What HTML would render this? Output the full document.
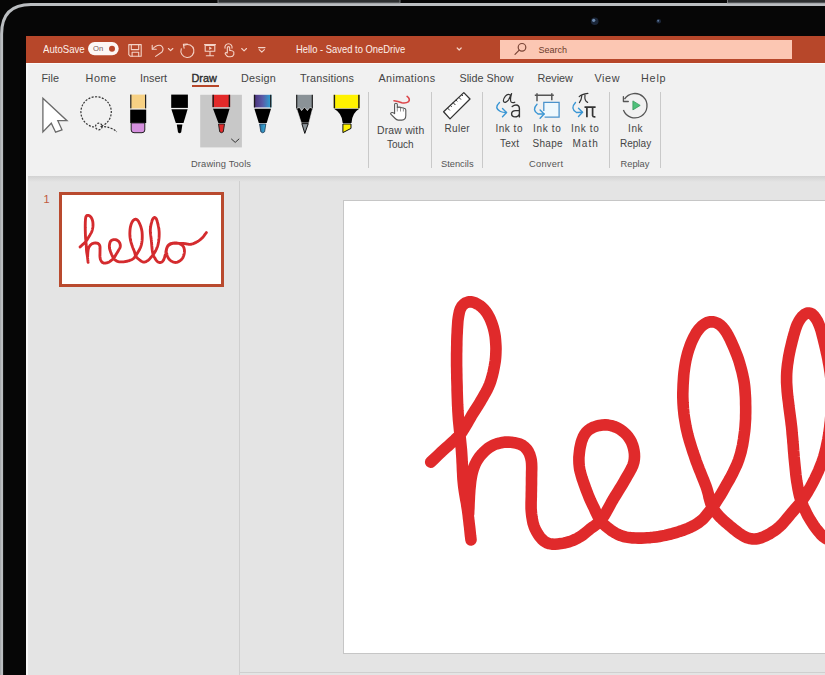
<!DOCTYPE html>
<html><head><meta charset="utf-8">
<style>
*{margin:0;padding:0;box-sizing:border-box}
html,body{width:825px;height:675px;overflow:hidden;background:#060606;font-family:"Liberation Sans",sans-serif}
.a{position:absolute}
.t{position:absolute;white-space:nowrap;line-height:1}
#screen{left:26px;top:36px;width:799px;height:639px;background:#e4e4e4}
#title{left:26px;top:36px;width:799px;height:27px;background:#b7472a}
#ribbon{left:26px;top:63px;width:799px;height:113px;background:#f1f1f1;border-top:1.5px solid #fbfbfb}
#shadow{left:26px;top:176px;width:799px;height:6px;background:linear-gradient(#d2d2d2,#e4e4e4)}
#search{left:500px;top:40px;width:292px;height:19px;background:#fcc7b3}
.tab{color:#454545;font-size:10.8px}
.lbl{color:#454545;font-size:10px}
.grp{color:#555;font-size:9.3px}
.sep{position:absolute;width:1px;background:#c9c9c9;top:92px;height:76px}
</style></head><body>
<svg class="a" style="left:0;top:0" width="825" height="675" viewBox="0 0 825 675">
  <path d="M1.6,675 V34 Q1.6,4.6 31,4.6 H825" fill="none" stroke="#babdc0" stroke-width="3"/>
  <rect x="218" y="-2" width="182" height="5" fill="#2e3031" stroke="#8a8d90" stroke-width="0.8"/>
  <rect x="727.5" y="-2" width="120" height="5" fill="#2e3031" stroke="#8a8d90" stroke-width="0.8"/>
  <circle cx="594.7" cy="21.3" r="3.8" fill="#1b2638"/>
  <circle cx="593.7" cy="20.3" r="1.6" fill="#6d8bb0"/>
  <circle cx="658.7" cy="21.3" r="2.3" fill="#1b2638"/>
  <circle cx="658.2" cy="20.8" r="1" fill="#5a7498"/>
</svg>
<div id="screen" class="a"></div>
<div id="title" class="a"></div>
<div id="search" class="a"></div>
<div id="ribbon" class="a"></div>
<div id="shadow" class="a"></div>
<div class="a" style="left:26px;top:64px;width:2px;height:611px;background:#f7f7f7"></div>
<!-- separators -->
<div class="sep" style="left:368px"></div>
<div class="sep" style="left:431px"></div>
<div class="sep" style="left:482px"></div>
<div class="sep" style="left:609px"></div>
<div class="sep" style="left:660px"></div>
<!-- pane separator & slide -->
<div class="a" style="left:239px;top:181px;width:1px;height:494px;background:#cfcfcf"></div>
<div class="a" style="left:240px;top:671.5px;width:585px;height:1px;background:#cfcfcf"></div>
<div class="a" style="left:59px;top:192px;width:165px;height:95px;border:3px solid #b94a2e;background:#fff"></div>
<div class="a" style="left:343px;top:200px;width:500px;height:454px;border:1px solid #c6c6c6;background:#fff"></div>

<svg class="a" style="left:0;top:0" width="825" height="675" viewBox="0 0 825 675">
  <!-- title bar icons -->
  <rect x="88" y="42.1" width="30.7" height="13.1" rx="6.55" fill="#fdf7f5"/>
  <circle cx="112" cy="48.8" r="3" fill="#b9472b"/>
  <g fill="none" stroke="#f4d3c7" stroke-width="1.1" stroke-linecap="round" stroke-linejoin="round">
    <path d="M128.8,44.6 H141.2 V56.3 H130.4 L128.8,54.7 Z"/>
    <path d="M131.3,44.6 V49.6 H138.7 V44.6"/>
    <path d="M132.1,56.3 V52.2 H138.7 V56.3"/>
    <path d="M152.2,45.2 V49.3 H156.3"/>
    <path d="M152.5,49 Q157,44 161,45.6 Q164.5,48 162,52 L155.6,56.4"/>
    <path d="M168.4,48.5 L170.6,50.7 L172.8,48.5"/>
    <path d="M184.4,45.2 A6.5,6.5 0 1 1 181.3,48.7"/>
    <path d="M183.4,44.3 L187.4,44.1 M183.4,44.3 L184.1,48.1"/>
    <path d="M204.5,44.6 H215.5 M205.2,44.6 V51.2 H214.8 V44.6 M210,51.2 V55.6 M206.3,55.8 H213.6"/>
    <path d="M225,48.2 A3.6,3.6 0 1 1 232,48.2"/>
    <path d="M227.3,53 V47.8 Q227.3,46.6 228.5,46.6 Q229.7,46.6 229.7,47.8 V50.5 Q232.5,50.2 233.8,52 V54.5 Q233,56.7 230.5,56.7 H228.5 Q226.8,56.7 225.4,54.3 Q224.6,53 226.2,52.6 L227.3,53"/>
    <path d="M241.7,48.5 L244.1,50.8 L246.5,48.5"/>
    <path d="M258.5,47.6 H265 M259.2,49.6 L261.8,52.2 L264.4,49.6"/>
  </g>
  <path d="M209.2,46.6 V50 L212,48.3 Z" fill="#f4d3c7"/>
  <rect x="205.2" y="44.6" width="9.6" height="1.4" fill="#f4d3c7"/>
  <!-- search icon -->
  <g fill="none" stroke="#7a4536" stroke-width="1.2" stroke-linecap="round">
    <circle cx="522" cy="47.3" r="3.8"/>
    <path d="M519.2,50.1 L515,54.3"/>
  </g>
  <path d="M457.2,48 L459.2,50 L461.2,48" fill="none" stroke="#f4d3c7" stroke-width="1.2" stroke-linecap="round" stroke-linejoin="round"/>
  <!-- cursor -->
  <path d="M42.9,98.2 L67,120.7 L57.8,120.7 L62,129.8 L55.6,132.2 L51.3,123.2 L42.9,132 Z" fill="#fff" stroke="#6a6a6a" stroke-width="1.3" stroke-linejoin="miter"/>
  <!-- lasso -->
  <g fill="none" stroke="#333" stroke-width="1.2" stroke-dasharray="2 1.4">
    <path d="M94,127 A15.2,15.2 0 1 1 100.5,126.5"/>
    <circle cx="98.8" cy="126.5" r="3.3"/>
    <path d="M100.5,126.5 Q111,126.5 116.8,131.8"/>
  </g>
  <!-- eraser -->
  <rect x="130.6" y="94.6" width="15.2" height="13.8" fill="#f7d184"/>
  <rect x="130.2" y="94.6" width="1.2" height="13.8" fill="#222"/>
  <rect x="145" y="94.6" width="1.2" height="13.8" fill="#222"/>
  <rect x="130.2" y="109.6" width="16" height="13.4" fill="#000"/>
  <path d="M131.2,122.9 H144.8 V130 Q144.8,132.7 142,132.7 H134 Q131.2,132.7 131.2,130 Z" fill="#d590de" stroke="#222" stroke-width="1"/>
  <!-- pen black -->
  <rect x="171.2" y="94.6" width="16.7" height="13.3" fill="#000"/>
  <path d="M171.4,109.3 H187.6 L183.5,122.9 H175.8 Z" fill="#000"/>
  <path d="M176.8,124.5 H182.4 L181.2,132.3 Q179.6,134 178,132.3 Z" fill="#000"/>
  <!-- selected pen bg -->
  <rect x="200.2" y="94.8" width="41.7" height="52.6" fill="#c8c8c8"/>
  <rect x="212.5" y="94.8" width="17.6" height="12.3" fill="#e32a2a"/>
  <rect x="212.5" y="94.8" width="1.4" height="12.3" fill="#1a1a1a"/>
  <rect x="228.7" y="94.8" width="1.4" height="12.3" fill="#1a1a1a"/>
  <path d="M213,108.7 H229.6 L225.2,122.9 H218.4 Z" fill="#000"/>
  <path d="M218.5,124 H224.5 L223.3,131.8 Q221.5,133.6 219.7,131.8 Z" fill="#e02a2a" stroke="#1a1a1a" stroke-width="0.9"/>
  <path d="M231.2,138.8 L235.2,142.4 L239.2,138.8" fill="none" stroke="#333" stroke-width="1"/>
  <!-- galaxy pen -->
  <defs><linearGradient id="gal" x1="0" y1="0" x2="1" y2="0"><stop offset="0" stop-color="#4b2f7a"/><stop offset="0.5" stop-color="#5a5ca8"/><stop offset="1" stop-color="#27a9d6"/></linearGradient>
  <linearGradient id="tipb" x1="0" y1="0" x2="1" y2="0"><stop offset="0" stop-color="#2a6fa0"/><stop offset="1" stop-color="#3bb3e0"/></linearGradient></defs>
  <rect x="253.9" y="94.8" width="17.5" height="12.6" fill="url(#gal)"/>
  <rect x="253.9" y="94.8" width="1.3" height="12.6" fill="#1a1a1a"/>
  <rect x="270.1" y="94.8" width="1.3" height="12.6" fill="#1a1a1a"/>
  <path d="M254.4,108.8 H271 L266.7,122.9 H258.8 Z" fill="#000"/>
  <path d="M259.6,124 H265.8 L264.6,131.8 Q262.7,133.8 260.8,131.8 Z" fill="url(#tipb)" stroke="#1a3550" stroke-width="0.8"/>
  <!-- pencil -->
  <rect x="296.1" y="94.8" width="16.8" height="15" fill="#8a9297"/>
  <rect x="296.1" y="94.8" width="1.2" height="14" fill="#222"/>
  <rect x="311.7" y="94.8" width="1.2" height="14" fill="#222"/>
  <path d="M296.6,108.5 L299.4,107.4 L301.6,110.6 L304.5,107.2 L307.4,110.6 L309.9,107.4 L312.6,108.5 L308.9,122.9 H301.3 Z" fill="#000" stroke="#eee" stroke-width="0.6"/>
  <path d="M301.8,123.6 H308.3 L304.8,133.4 Z" fill="#8a9297" stroke="#000" stroke-width="0.9" stroke-linejoin="round"/>
  <!-- highlighter -->
  <rect x="333.7" y="94.8" width="25.9" height="13.4" fill="#fff200"/>
  <rect x="333.7" y="94.8" width="1.4" height="13.4" fill="#1a1a1a"/>
  <rect x="358.2" y="94.8" width="1.4" height="13.4" fill="#1a1a1a"/>
  <path d="M334,108.8 H359.3 Q352,113 351.5,122.9 H342.7 Q342,113 334,108.8 Z" fill="#000"/>
  <path d="M342.9,124 H351 V128.4 L342.9,132.6 Z" fill="#fff200" stroke="#111" stroke-width="1"/>
  <!-- draw with touch -->
  <path d="M394,100.7 Q398,101 401.8,102.7 Q406,103.5 408.6,101.6 Q410.6,99 407.1,96.4" fill="none" stroke="#dc4448" stroke-width="1.6" stroke-linecap="round"/>
  <path d="M394.6,112.6 V104.6 Q394.6,103.2 396,103.2 Q397.3,103.2 397.3,104.6 V107.4 Q399.6,106.8 401.6,107.7 Q403.6,107.6 404.4,108.5 Q405.8,108.6 405.8,110 V115.5 Q405.8,120 401.8,120.1 H398.2 Q396.6,120 395.2,118.5 L390.8,114.2 Q390.3,113.2 391.3,112.7 Q392.6,112.2 394.6,113.6 Z" fill="#fff" stroke="#555" stroke-width="1.1" stroke-linejoin="round"/>
  <path d="M397.3,107.4 V111.5 M400.5,107.6 V111.5 M403.4,108.2 V111.5" fill="none" stroke="#777" stroke-width="0.8"/>
  <!-- ruler -->
  <path d="M443.6,111.8 L463.8,92.6 L470,99 L450,118.9 Z" fill="#fff" stroke="#333" stroke-width="1.3" stroke-linejoin="round"/>
  <g stroke="#333" stroke-width="1">
    <path d="M447.5,108 L449.8,110.4 M450.3,105.3 L451.7,106.8 M453.1,102.6 L455.4,105 M455.9,99.9 L457.3,101.4 M458.7,97.2 L461,99.6 M461.5,94.5 L462.9,96"/>
  </g>
  <!-- ink to text -->
  <path d="M499.5,102.4 Q493.5,107.95 500.5,111.5 Q502.5,112.5 506.5,112.5" fill="none" stroke="#3a96d4" stroke-width="1.4" stroke-linecap="round"/>
  <path d="M502.5,108.5 L506.5,112.5 L502.5,116.8" fill="none" stroke="#3a96d4" stroke-width="1.4" stroke-linecap="round" stroke-linejoin="round"/>
  <path d="M510.8,95.8 Q508.5,92.6 505.4,96.2 Q502.6,99.8 503.7,101.8 Q505.6,103.4 508.6,99.8 L511.6,93.6 Q509.8,99.6 511,101.8 Q512.6,103.4 514.8,102.2" fill="none" stroke="#333" stroke-width="1.2" stroke-linecap="round" stroke-linejoin="round"/>
  <path d="M512.2,106.6 Q514,105 516,105 Q519.4,105 519.4,108.8 V116.9 M519.4,110.6 H515.6 Q511.6,110.6 511.6,113.8 Q511.6,116.9 515,116.9 Q518.2,116.9 519.4,114.2" fill="none" stroke="#333" stroke-width="1.4" stroke-linecap="round" stroke-linejoin="round"/>
  <!-- ink to shape -->
  <path d="M534.8,95.3 H553.8 M537,93.3 V101.3 M551.8,93.3 V100.2" fill="none" stroke="#555" stroke-width="1.5"/>
  <path d="M543.8,111 V102.4 H559.1 V117.2 H544.6" fill="#eef8fd" stroke="#4a93cc" stroke-width="1.3"/>
  <path d="M537,104.3 Q531.5,110.15 538,114 Q540,114 544.1,114" fill="none" stroke="#3a96d4" stroke-width="1.4" stroke-linecap="round"/>
  <path d="M540.1,110 L544.1,114 L540.1,118.3" fill="none" stroke="#3a96d4" stroke-width="1.4" stroke-linecap="round" stroke-linejoin="round"/>
  <!-- ink to math -->
  <path d="M575.5,102.4 Q569.8,108.45 576.5,112.5 Q578.5,112.3 582.5,112.3" fill="none" stroke="#3a96d4" stroke-width="1.4" stroke-linecap="round"/>
  <path d="M578.5,108.3 L582.5,112.3 L578.5,116.6" fill="none" stroke="#3a96d4" stroke-width="1.4" stroke-linecap="round" stroke-linejoin="round"/>
  <path d="M579.2,96.6 Q581.5,94.2 587.9,93.4 M581.8,95.8 Q581.5,100 579.4,102.6 M585,95.2 Q584.2,100.8 587.6,102.4" fill="none" stroke="#333" stroke-width="1.2" stroke-linecap="round"/>
  <path d="M584.5,107.2 H595.6 M586.9,107.2 V117.2 M592.6,107.2 V115.6 Q592.8,117 595.4,116.8" fill="none" stroke="#333" stroke-width="1.7"/>
  <!-- ink replay -->
  <path d="M624.5,99.2 A12.2,12.2 0 1 1 623.4,110" fill="none" stroke="#555" stroke-width="1.3"/>
  <path d="M623.4,96.6 V101.5 H628.3" fill="none" stroke="#555" stroke-width="1.3" stroke-linecap="round" stroke-linejoin="round"/>
  <path d="M632.9,100.9 L640.2,105.4 L632.9,109.9 Z" fill="#4ec07a" stroke="#3a9b5e" stroke-width="0.8" stroke-linejoin="round"/>
  <!-- hello big -->
  <g fill="none" stroke="#e02a2b" stroke-width="11.6" stroke-linecap="round" stroke-linejoin="round">
    <path d="M430.7,462.1 433.1,459.9 435.1,458.0 437.3,455.9 439.4,453.9 441.6,451.8 443.8,449.8 446.0,447.8 448.3,445.8 450.5,443.8 452.7,441.8 455.0,439.7 457.1,437.6 459.2,435.5 461.1,433.2 462.8,430.7 464.4,428.2 465.9,425.6 467.4,423.0 468.9,420.4 470.4,417.8 471.9,415.2 473.5,412.7 475.1,410.1 476.7,407.6 478.3,405.1 479.9,402.5 481.4,399.9 482.9,397.3 484.4,394.7 485.9,392.1 487.3,389.5 488.5,386.8 489.7,384.0 490.7,381.2 491.6,378.3 492.4,375.4 493.1,372.5 493.7,369.6 494.3,366.6 494.8,363.7 495.3,360.7 495.6,357.7 495.8,354.7 495.9,351.7 496.0,348.7 495.9,345.7 495.7,342.7 495.5,339.8 495.2,336.8 494.7,333.8 494.1,330.9 493.4,328.0 492.5,325.1 491.5,322.3 490.4,319.5 489.1,316.8 487.6,314.2 486.0,311.7 484.1,309.4 482.0,307.3 479.6,305.4 477.1,303.9 474.4,302.6 471.6,301.9 468.7,301.9 466.0,302.7 463.6,304.3 461.7,306.4 460.3,309.0 459.4,311.8 458.8,314.8 458.3,317.7 457.9,320.7 457.7,323.7 457.5,326.7 457.3,329.7 457.2,332.7 457.0,335.7 456.9,338.7 456.8,341.7 456.8,344.7 456.7,347.7 456.7,350.7 456.6,353.7 456.6,356.7 456.6,359.7 456.6,362.7 456.6,365.7 456.7,368.7 456.7,371.7 456.8,374.7 456.8,377.7 456.9,380.7 457.0,383.7 457.1,386.7 457.1,389.7 457.2,392.7 457.3,395.7 457.4,398.6 457.5,401.6 457.6,404.6 457.8,407.6 457.9,410.6 458.1,413.6 458.3,416.6 458.5,419.6 458.8,422.6 459.1,425.6 459.4,428.6 459.7,431.6 459.9,434.5 460.2,437.5 460.5,440.5 460.8,443.5 461.1,446.5 461.4,449.5 461.6,452.5 461.8,455.5 462.0,458.5 462.1,461.5 462.3,464.5 462.4,467.5 462.5,470.4 462.7,473.4 462.8,476.4 463.0,479.4 463.3,482.4 463.6,485.4 464.0,488.4 464.4,491.3 464.9,494.3 465.4,497.3 465.9,500.2 466.5,503.2 466.9,506.1 467.4,509.1 467.8,512.1 468.2,515.0 468.5,518.0 468.9,521.0 469.2,524.0 469.6,527.0 469.9,529.9 470.2,532.9 470.5,535.8 470.8,538.1 471.0,539.9 M468.6,514.0 468.7,510.8 468.9,508.0 469.0,505.0 469.1,502.0 469.3,499.0 469.4,496.0 469.6,493.0 469.8,490.0 470.1,487.0 470.4,484.1 470.7,481.1 471.2,478.1 471.7,475.2 472.4,472.2 473.2,469.4 474.2,466.5 475.3,463.8 476.7,461.1 478.3,458.6 480.0,456.2 482.0,453.9 484.1,451.7 486.3,449.7 488.6,447.9 491.1,446.3 493.8,444.9 496.6,443.9 499.5,443.1 502.4,442.5 505.4,442.1 508.4,442.1 511.3,442.3 514.3,442.7 517.2,443.4 520.1,444.2 522.7,445.5 525.0,447.3 527.0,449.5 528.6,452.0 529.8,454.7 530.7,457.6 531.3,460.5 531.6,463.5 531.7,466.5 531.7,469.5 531.6,472.5 531.6,475.5 531.5,478.5 531.5,481.5 531.5,484.5 531.4,487.5 531.4,490.5 531.3,493.5 531.3,496.5 531.2,499.5 531.1,502.5 531.1,505.5 531.1,508.5 531.3,511.4 531.6,514.4 532.0,517.4 532.5,520.4 533.1,523.3 534.0,526.1 535.1,528.9 536.5,531.6 538.0,534.2 539.7,536.6 541.6,538.9 543.8,540.9 546.2,542.5 549.0,543.6 551.9,544.1 554.8,544.2 557.8,543.9 560.8,543.6 563.8,543.1 566.7,542.4 569.6,541.6 572.4,540.6 575.2,539.4 577.8,538.1 580.4,536.6 582.8,534.9 585.2,533.0 587.5,531.1 589.8,529.2 592.2,527.4 594.7,525.7 597.1,523.9 599.3,521.9 601.3,519.6 603.0,517.2 604.7,514.7 606.2,512.1 607.6,509.5 609.0,506.9 610.5,504.2 611.9,501.6 613.4,499.0 615.0,496.4 616.6,493.9 618.2,491.3 619.7,488.8 621.3,486.2 622.8,483.7 624.3,481.1 625.8,478.5 627.3,475.9 628.8,473.3 630.3,470.7 631.7,468.0 632.9,465.3 633.8,462.4 634.3,459.5 634.5,456.5 634.4,453.5 634.0,450.6 633.4,447.7 632.5,444.8 631.4,442.0 630.0,439.4 628.3,436.9 626.4,434.6 624.3,432.6 622.0,430.7 619.5,429.0 616.9,427.6 614.1,426.5 611.2,425.6 608.3,425.1 605.3,424.8 602.4,425.0 599.4,425.4 596.5,426.1 593.7,427.1 591.0,428.4 588.6,430.0 586.4,432.0 584.6,434.4 583.2,437.0 582.1,439.8 581.2,442.6 580.5,445.6 579.9,448.5 579.5,451.5 579.2,454.4 578.9,457.4 578.9,460.4 579.0,463.4 579.3,466.4 579.7,469.4 580.4,472.3 581.2,475.2 582.0,478.0 583.0,480.9 584.0,483.7 585.0,486.5 586.0,489.4 587.1,492.2 588.2,495.0 589.3,497.7 590.5,500.5 591.8,503.2 593.1,505.9 594.4,508.6 595.6,511.3 596.9,514.1 598.2,516.8 599.6,519.4 601.3,521.8 603.4,524.0 605.6,526.0 607.9,527.9 610.3,529.7 612.7,531.4 615.3,533.0 617.9,534.4 620.7,535.6 623.5,536.5 626.4,537.1 629.4,537.6 632.4,537.9 635.4,538.0 638.4,538.1 641.3,538.1 644.3,538.0 647.3,537.8 650.3,537.6 653.3,537.3 656.3,536.9 659.3,536.5 662.2,535.9 665.2,535.4 668.1,534.7 671.0,534.0 673.9,533.2 676.8,532.4 679.6,531.4 682.5,530.5 685.3,529.4 688.1,528.3 690.8,527.1 693.5,525.8 696.1,524.3 698.6,522.6 700.9,520.8 703.2,518.8 705.2,516.6 707.1,514.3 709.0,512.0 710.8,509.6 712.6,507.2 714.3,504.7 716.0,502.2 717.6,499.7 719.2,497.2 720.8,494.6 722.3,492.0 723.8,489.4 725.2,486.8 726.7,484.2 728.2,481.6 729.7,479.0 731.1,476.3 732.5,473.7 733.8,471.0 735.1,468.3 736.4,465.6 737.5,462.8 738.6,460.0 739.5,457.1 740.4,454.3 741.2,451.4 741.8,448.5 742.5,445.5 743.0,442.6 743.5,439.6 743.9,436.6 744.3,433.7 744.7,430.7 745.0,427.7 745.2,424.7 745.4,421.7 745.6,418.7 745.6,415.7 745.7,412.7 745.7,409.7 745.7,406.7 745.6,403.7 745.6,400.7 745.5,397.7 745.3,394.7 745.1,391.7 744.9,388.8 744.6,385.8 744.2,382.8 743.7,379.8 743.1,376.9 742.5,374.0 741.8,371.0 741.0,368.1 740.2,365.2 739.4,362.4 738.5,359.5 737.5,356.7 736.4,353.9 735.3,351.1 734.2,348.3 733.0,345.6 731.7,342.8 730.5,340.1 729.2,337.4 727.8,334.8 726.3,332.2 724.6,329.7 722.7,327.4 720.6,325.3 718.1,323.6 715.5,322.4 712.6,321.8 709.8,321.9 707.0,322.7 704.4,324.1 702.0,325.9 699.9,328.0 698.0,330.3 696.3,332.7 694.8,335.3 693.4,338.0 692.1,340.7 690.9,343.5 689.9,346.3 688.9,349.1 688.0,351.9 687.2,354.8 686.5,357.7 685.8,360.7 685.3,363.6 684.8,366.6 684.4,369.6 684.0,372.5 683.7,375.5 683.5,378.5 683.3,381.5 683.1,384.5 683.0,387.5 682.9,390.5 682.8,393.5 682.8,396.5 682.9,399.5 683.0,402.5 683.2,405.5 683.4,408.5 683.7,411.5 684.0,414.4 684.4,417.4 684.9,420.4 685.4,423.3 685.9,426.3 686.5,429.2 687.2,432.1 687.9,435.1 688.7,438.0 689.5,440.8 690.4,443.7 691.3,446.6 692.2,449.4 693.1,452.3 694.1,455.1 695.1,458.0 696.0,460.8 697.1,463.6 698.1,466.4 699.2,469.2 700.4,472.0 701.5,474.8 702.6,477.6 703.7,480.3 704.8,483.1 705.9,485.9 706.9,488.8 707.7,491.6 708.5,494.5 709.1,497.5 709.9,500.4 710.7,503.2 711.9,506.0 713.3,508.6 714.9,511.1 716.8,513.5 718.7,515.7 720.8,517.9 723.0,520.0 725.2,522.0 727.5,523.9 729.8,525.9 732.1,527.8 734.4,529.7 736.8,531.5 739.2,533.3 741.7,534.9 744.3,536.4 747.0,537.7 749.8,538.6 752.7,539.0 755.7,539.0 758.6,538.5 761.5,537.6 764.2,536.5 766.9,535.2 769.6,533.8 772.1,532.2 774.6,530.6 777.0,528.8 779.3,526.9 781.5,524.8 783.5,522.6 785.5,520.3 787.4,518.0 789.3,515.7 791.2,513.4 793.2,511.1 795.1,508.9 797.1,506.6 799.1,504.3 800.9,502.0 802.7,499.5 804.4,497.0 806.0,494.5 807.6,492.0 809.1,489.4 810.6,486.8 812.0,484.2 813.4,481.5 814.8,478.8 816.1,476.1 817.3,473.4 818.6,470.7 819.7,467.9 820.8,465.1 821.9,462.3 822.9,459.5 823.8,456.6 824.6,453.7 825.4,450.8 826.1,447.9 826.7,445.0 827.3,442.1 827.9,439.1 828.4,436.2 828.9,433.2 829.3,430.2 829.7,427.3 830.0,424.3 830.4,421.3 830.6,418.3 830.9,415.3 831.1,412.3 831.3,409.3 831.4,406.3 831.5,403.3 831.6,400.3 831.6,397.3 831.6,394.3 831.6,391.3 831.5,388.3 831.3,385.3 831.2,382.3 830.9,379.4 830.6,376.4 830.3,373.4 829.8,370.4 829.4,367.5 828.9,364.5 828.3,361.6 827.8,358.6 827.2,355.7 826.5,352.7 825.9,349.8 825.2,346.9 824.5,344.0 823.8,341.1 823.1,338.1 822.3,335.2 821.6,332.3 820.8,329.5 819.8,326.6 818.7,323.8 817.5,321.1 815.9,318.5 814.2,316.2 812.1,314.1 809.7,313.0 807.1,313.1 804.6,314.4 802.4,316.3 800.5,318.6 798.9,321.1 797.5,323.8 796.4,326.5 795.4,329.4 794.6,332.2 793.7,335.1 793.0,338.0 792.2,340.9 791.5,343.8 790.8,346.8 790.1,349.7 789.5,352.6 788.9,355.6 788.4,358.5 788.0,361.5 787.5,364.5 787.2,367.4 786.9,370.4 786.7,373.4 786.6,376.4 786.6,379.4 786.6,382.4 786.8,385.4 787.0,388.4 787.2,391.4 787.5,394.4 787.8,397.4 788.2,400.3 788.6,403.3 788.9,406.3 789.3,409.3 789.7,412.2 790.1,415.2 790.5,418.2 790.9,421.2 791.2,424.1 791.6,427.1 791.9,430.1 792.1,433.1 792.4,436.1 792.7,439.1 792.9,442.1 793.2,445.0 793.4,448.0 793.6,451.0 793.9,454.0 794.1,457.0 794.4,460.0 794.7,463.0 795.0,466.0 795.3,469.0 795.6,471.9 795.9,474.9 796.3,477.9 796.7,480.9 797.2,483.8 797.7,486.8 798.2,489.7 798.8,492.7 799.5,495.6 800.3,498.5 801.3,501.3 802.4,504.1 803.5,506.9 804.8,509.6 806.1,512.3 807.4,515.0 808.9,517.6 810.4,520.2 812.0,522.7 813.6,525.2 815.4,527.7 817.2,530.0 819.1,532.3 821.1,534.6 823.3,536.6 825.7,538.4 828.3,539.8 831.1,540.8 834.0,541.3 836.9,541.3 839.8,540.8 842.6,539.7 845.2,538.3 847.5,536.5 849.6,534.4 851.5,532.0 853.1,529.5 854.5,526.9 855.7,524.1 856.8,521.3 857.8,518.5 858.7,515.7 859.6,512.8 860.5,509.9 861.4,507.1 862.2,504.2 862.9,501.3 863.6,498.4 864.2,495.4 864.7,492.5 865.3,489.5 865.8,486.5 866.3,483.6 866.8,480.6 867.4,477.7 868.0,474.8 868.8,471.9 869.7,469.0 870.7,466.2 871.8,463.4 873.1,460.7 874.5,458.0 876.1,455.6 878.0,453.3 880.1,451.2 882.5,449.3 885.0,447.8 887.7,446.4 890.5,445.4 893.3,444.5 896.3,443.8 899.2,443.2 902.2,442.8 905.1,442.4 908.1,442.2 911.1,442.0 914.1,442.0 917.1,442.1 920.1,442.2 923.1,442.6 926.0,443.1 928.9,443.8 931.8,444.7 934.6,445.7 937.4,446.8 940.1,448.1 942.7,449.6 945.2,451.2 947.6,453.0 949.8,455.0 951.8,457.2 953.6,459.6 955.1,462.2 956.3,464.9 957.3,467.7 958.2,470.6 958.8,473.5 959.3,476.5 959.6,479.5 959.7,482.5 959.7,485.5 959.5,488.5 959.2,491.4 958.8,494.4 958.2,497.4 957.6,500.3 956.8,503.2 955.9,506.0 954.9,508.9 953.8,511.7 952.6,514.4 951.2,517.0 949.7,519.6 947.9,522.0 946.0,524.3 944.0,526.5 941.8,528.5 939.5,530.5 937.1,532.2 934.6,533.9 932.0,535.4 929.4,536.8 926.6,538.1 923.8,539.2 921.0,540.0 918.0,540.6 915.1,540.9 912.1,540.8 909.1,540.4 906.2,539.7 903.4,538.8 900.6,537.6 897.9,536.3 895.3,534.9 892.8,533.3 890.3,531.6 887.9,529.8 885.7,527.8 883.5,525.7 881.5,523.5 879.7,521.1 878.0,518.6 876.6,516.0 875.2,513.4 874.0,510.6 872.9,507.8 872.0,505.0 871.1,502.1 870.3,499.2 869.6,496.3 869.1,493.4 868.6,490.4 868.3,487.4 868.1,484.4 868.1,481.4 868.3,478.4 868.7,475.5 869.3,472.5 870.1,469.7 871.1,466.8 872.2,464.1 873.6,461.4 875.3,458.9 877.1,456.6 879.2,454.5 881.5,452.6 884.0,450.9 886.5,449.4 889.2,448.1 892.0,446.9 894.8,445.9 897.7,445.1 900.6,444.4 903.6,444.0 906.6,443.8 909.6,443.6 912.6,443.6 915.6,443.6 918.6,443.7 921.6,443.7 924.6,443.8 927.6,443.8 930.6,443.8 933.6,443.8 936.6,443.8 939.6,443.9 942.6,444.0 945.6,444.1 948.5,444.2 951.5,444.4 954.5,444.6 957.5,444.8 960.5,445.1 963.5,445.5 966.4,446.0 969.4,446.6 972.3,447.1 975.3,447.7 978.2,448.2 981.2,448.6 984.2,448.9 987.2,448.9 990.2,448.8 993.1,448.4 996.1,447.8 999.0,447.1 1001.8,446.2 1004.7,445.2 1007.5,444.1 1010.2,443.0 1012.9,441.7 1015.6,440.4 1018.3,439.1 1021.0,437.7 1023.6,436.2 1026.2,434.7 1028.7,433.1 1031.3,431.5 1033.7,429.8 1036.1,428.0 1038.5,426.2 1040.9,424.3 1043.1,422.4 1045.4,420.4 1047.6,418.3 1049.7,416.2 1051.8,414.1 1053.8,411.8 1055.7,409.5 1057.6,407.2 1059.4,404.8 1061.2,402.4 1063.0,400.0 1064.8,397.6 1066.5,395.2 1068.3,392.8 1069.7,391.0 1070.8,389.6"/>
  </g>
  <g fill="none" stroke="#d42b2e" stroke-width="14.5" stroke-linecap="round" stroke-linejoin="round" transform="matrix(0.1972 0 0 0.1972 -4.8 155.8)">
    <path d="M430.7,462.1 433.1,459.9 435.1,458.0 437.3,455.9 439.4,453.9 441.6,451.8 443.8,449.8 446.0,447.8 448.3,445.8 450.5,443.8 452.7,441.8 455.0,439.7 457.1,437.6 459.2,435.5 461.1,433.2 462.8,430.7 464.4,428.2 465.9,425.6 467.4,423.0 468.9,420.4 470.4,417.8 471.9,415.2 473.5,412.7 475.1,410.1 476.7,407.6 478.3,405.1 479.9,402.5 481.4,399.9 482.9,397.3 484.4,394.7 485.9,392.1 487.3,389.5 488.5,386.8 489.7,384.0 490.7,381.2 491.6,378.3 492.4,375.4 493.1,372.5 493.7,369.6 494.3,366.6 494.8,363.7 495.3,360.7 495.6,357.7 495.8,354.7 495.9,351.7 496.0,348.7 495.9,345.7 495.7,342.7 495.5,339.8 495.2,336.8 494.7,333.8 494.1,330.9 493.4,328.0 492.5,325.1 491.5,322.3 490.4,319.5 489.1,316.8 487.6,314.2 486.0,311.7 484.1,309.4 482.0,307.3 479.6,305.4 477.1,303.9 474.4,302.6 471.6,301.9 468.7,301.9 466.0,302.7 463.6,304.3 461.7,306.4 460.3,309.0 459.4,311.8 458.8,314.8 458.3,317.7 457.9,320.7 457.7,323.7 457.5,326.7 457.3,329.7 457.2,332.7 457.0,335.7 456.9,338.7 456.8,341.7 456.8,344.7 456.7,347.7 456.7,350.7 456.6,353.7 456.6,356.7 456.6,359.7 456.6,362.7 456.6,365.7 456.7,368.7 456.7,371.7 456.8,374.7 456.8,377.7 456.9,380.7 457.0,383.7 457.1,386.7 457.1,389.7 457.2,392.7 457.3,395.7 457.4,398.6 457.5,401.6 457.6,404.6 457.8,407.6 457.9,410.6 458.1,413.6 458.3,416.6 458.5,419.6 458.8,422.6 459.1,425.6 459.4,428.6 459.7,431.6 459.9,434.5 460.2,437.5 460.5,440.5 460.8,443.5 461.1,446.5 461.4,449.5 461.6,452.5 461.8,455.5 462.0,458.5 462.1,461.5 462.3,464.5 462.4,467.5 462.5,470.4 462.7,473.4 462.8,476.4 463.0,479.4 463.3,482.4 463.6,485.4 464.0,488.4 464.4,491.3 464.9,494.3 465.4,497.3 465.9,500.2 466.5,503.2 466.9,506.1 467.4,509.1 467.8,512.1 468.2,515.0 468.5,518.0 468.9,521.0 469.2,524.0 469.6,527.0 469.9,529.9 470.2,532.9 470.5,535.8 470.8,538.1 471.0,539.9 M468.6,514.0 468.7,510.8 468.9,508.0 469.0,505.0 469.1,502.0 469.3,499.0 469.4,496.0 469.6,493.0 469.8,490.0 470.1,487.0 470.4,484.1 470.7,481.1 471.2,478.1 471.7,475.2 472.4,472.2 473.2,469.4 474.2,466.5 475.3,463.8 476.7,461.1 478.3,458.6 480.0,456.2 482.0,453.9 484.1,451.7 486.3,449.7 488.6,447.9 491.1,446.3 493.8,444.9 496.6,443.9 499.5,443.1 502.4,442.5 505.4,442.1 508.4,442.1 511.3,442.3 514.3,442.7 517.2,443.4 520.1,444.2 522.7,445.5 525.0,447.3 527.0,449.5 528.6,452.0 529.8,454.7 530.7,457.6 531.3,460.5 531.6,463.5 531.7,466.5 531.7,469.5 531.6,472.5 531.6,475.5 531.5,478.5 531.5,481.5 531.5,484.5 531.4,487.5 531.4,490.5 531.3,493.5 531.3,496.5 531.2,499.5 531.1,502.5 531.1,505.5 531.1,508.5 531.3,511.4 531.6,514.4 532.0,517.4 532.5,520.4 533.1,523.3 534.0,526.1 535.1,528.9 536.5,531.6 538.0,534.2 539.7,536.6 541.6,538.9 543.8,540.9 546.2,542.5 549.0,543.6 551.9,544.1 554.8,544.2 557.8,543.9 560.8,543.6 563.8,543.1 566.7,542.4 569.6,541.6 572.4,540.6 575.2,539.4 577.8,538.1 580.4,536.6 582.8,534.9 585.2,533.0 587.5,531.1 589.8,529.2 592.2,527.4 594.7,525.7 597.1,523.9 599.3,521.9 601.3,519.6 603.0,517.2 604.7,514.7 606.2,512.1 607.6,509.5 609.0,506.9 610.5,504.2 611.9,501.6 613.4,499.0 615.0,496.4 616.6,493.9 618.2,491.3 619.7,488.8 621.3,486.2 622.8,483.7 624.3,481.1 625.8,478.5 627.3,475.9 628.8,473.3 630.3,470.7 631.7,468.0 632.9,465.3 633.8,462.4 634.3,459.5 634.5,456.5 634.4,453.5 634.0,450.6 633.4,447.7 632.5,444.8 631.4,442.0 630.0,439.4 628.3,436.9 626.4,434.6 624.3,432.6 622.0,430.7 619.5,429.0 616.9,427.6 614.1,426.5 611.2,425.6 608.3,425.1 605.3,424.8 602.4,425.0 599.4,425.4 596.5,426.1 593.7,427.1 591.0,428.4 588.6,430.0 586.4,432.0 584.6,434.4 583.2,437.0 582.1,439.8 581.2,442.6 580.5,445.6 579.9,448.5 579.5,451.5 579.2,454.4 578.9,457.4 578.9,460.4 579.0,463.4 579.3,466.4 579.7,469.4 580.4,472.3 581.2,475.2 582.0,478.0 583.0,480.9 584.0,483.7 585.0,486.5 586.0,489.4 587.1,492.2 588.2,495.0 589.3,497.7 590.5,500.5 591.8,503.2 593.1,505.9 594.4,508.6 595.6,511.3 596.9,514.1 598.2,516.8 599.6,519.4 601.3,521.8 603.4,524.0 605.6,526.0 607.9,527.9 610.3,529.7 612.7,531.4 615.3,533.0 617.9,534.4 620.7,535.6 623.5,536.5 626.4,537.1 629.4,537.6 632.4,537.9 635.4,538.0 638.4,538.1 641.3,538.1 644.3,538.0 647.3,537.8 650.3,537.6 653.3,537.3 656.3,536.9 659.3,536.5 662.2,535.9 665.2,535.4 668.1,534.7 671.0,534.0 673.9,533.2 676.8,532.4 679.6,531.4 682.5,530.5 685.3,529.4 688.1,528.3 690.8,527.1 693.5,525.8 696.1,524.3 698.6,522.6 700.9,520.8 703.2,518.8 705.2,516.6 707.1,514.3 709.0,512.0 710.8,509.6 712.6,507.2 714.3,504.7 716.0,502.2 717.6,499.7 719.2,497.2 720.8,494.6 722.3,492.0 723.8,489.4 725.2,486.8 726.7,484.2 728.2,481.6 729.7,479.0 731.1,476.3 732.5,473.7 733.8,471.0 735.1,468.3 736.4,465.6 737.5,462.8 738.6,460.0 739.5,457.1 740.4,454.3 741.2,451.4 741.8,448.5 742.5,445.5 743.0,442.6 743.5,439.6 743.9,436.6 744.3,433.7 744.7,430.7 745.0,427.7 745.2,424.7 745.4,421.7 745.6,418.7 745.6,415.7 745.7,412.7 745.7,409.7 745.7,406.7 745.6,403.7 745.6,400.7 745.5,397.7 745.3,394.7 745.1,391.7 744.9,388.8 744.6,385.8 744.2,382.8 743.7,379.8 743.1,376.9 742.5,374.0 741.8,371.0 741.0,368.1 740.2,365.2 739.4,362.4 738.5,359.5 737.5,356.7 736.4,353.9 735.3,351.1 734.2,348.3 733.0,345.6 731.7,342.8 730.5,340.1 729.2,337.4 727.8,334.8 726.3,332.2 724.6,329.7 722.7,327.4 720.6,325.3 718.1,323.6 715.5,322.4 712.6,321.8 709.8,321.9 707.0,322.7 704.4,324.1 702.0,325.9 699.9,328.0 698.0,330.3 696.3,332.7 694.8,335.3 693.4,338.0 692.1,340.7 690.9,343.5 689.9,346.3 688.9,349.1 688.0,351.9 687.2,354.8 686.5,357.7 685.8,360.7 685.3,363.6 684.8,366.6 684.4,369.6 684.0,372.5 683.7,375.5 683.5,378.5 683.3,381.5 683.1,384.5 683.0,387.5 682.9,390.5 682.8,393.5 682.8,396.5 682.9,399.5 683.0,402.5 683.2,405.5 683.4,408.5 683.7,411.5 684.0,414.4 684.4,417.4 684.9,420.4 685.4,423.3 685.9,426.3 686.5,429.2 687.2,432.1 687.9,435.1 688.7,438.0 689.5,440.8 690.4,443.7 691.3,446.6 692.2,449.4 693.1,452.3 694.1,455.1 695.1,458.0 696.0,460.8 697.1,463.6 698.1,466.4 699.2,469.2 700.4,472.0 701.5,474.8 702.6,477.6 703.7,480.3 704.8,483.1 705.9,485.9 706.9,488.8 707.7,491.6 708.5,494.5 709.1,497.5 709.9,500.4 710.7,503.2 711.9,506.0 713.3,508.6 714.9,511.1 716.8,513.5 718.7,515.7 720.8,517.9 723.0,520.0 725.2,522.0 727.5,523.9 729.8,525.9 732.1,527.8 734.4,529.7 736.8,531.5 739.2,533.3 741.7,534.9 744.3,536.4 747.0,537.7 749.8,538.6 752.7,539.0 755.7,539.0 758.6,538.5 761.5,537.6 764.2,536.5 766.9,535.2 769.6,533.8 772.1,532.2 774.6,530.6 777.0,528.8 779.3,526.9 781.5,524.8 783.5,522.6 785.5,520.3 787.4,518.0 789.3,515.7 791.2,513.4 793.2,511.1 795.1,508.9 797.1,506.6 799.1,504.3 800.9,502.0 802.7,499.5 804.4,497.0 806.0,494.5 807.6,492.0 809.1,489.4 810.6,486.8 812.0,484.2 813.4,481.5 814.8,478.8 816.1,476.1 817.3,473.4 818.6,470.7 819.7,467.9 820.8,465.1 821.9,462.3 822.9,459.5 823.8,456.6 824.6,453.7 825.4,450.8 826.1,447.9 826.7,445.0 827.3,442.1 827.9,439.1 828.4,436.2 828.9,433.2 829.3,430.2 829.7,427.3 830.0,424.3 830.4,421.3 830.6,418.3 830.9,415.3 831.1,412.3 831.3,409.3 831.4,406.3 831.5,403.3 831.6,400.3 831.6,397.3 831.6,394.3 831.6,391.3 831.5,388.3 831.3,385.3 831.2,382.3 830.9,379.4 830.6,376.4 830.3,373.4 829.8,370.4 829.4,367.5 828.9,364.5 828.3,361.6 827.8,358.6 827.2,355.7 826.5,352.7 825.9,349.8 825.2,346.9 824.5,344.0 823.8,341.1 823.1,338.1 822.3,335.2 821.6,332.3 820.8,329.5 819.8,326.6 818.7,323.8 817.5,321.1 815.9,318.5 814.2,316.2 812.1,314.1 809.7,313.0 807.1,313.1 804.6,314.4 802.4,316.3 800.5,318.6 798.9,321.1 797.5,323.8 796.4,326.5 795.4,329.4 794.6,332.2 793.7,335.1 793.0,338.0 792.2,340.9 791.5,343.8 790.8,346.8 790.1,349.7 789.5,352.6 788.9,355.6 788.4,358.5 788.0,361.5 787.5,364.5 787.2,367.4 786.9,370.4 786.7,373.4 786.6,376.4 786.6,379.4 786.6,382.4 786.8,385.4 787.0,388.4 787.2,391.4 787.5,394.4 787.8,397.4 788.2,400.3 788.6,403.3 788.9,406.3 789.3,409.3 789.7,412.2 790.1,415.2 790.5,418.2 790.9,421.2 791.2,424.1 791.6,427.1 791.9,430.1 792.1,433.1 792.4,436.1 792.7,439.1 792.9,442.1 793.2,445.0 793.4,448.0 793.6,451.0 793.9,454.0 794.1,457.0 794.4,460.0 794.7,463.0 795.0,466.0 795.3,469.0 795.6,471.9 795.9,474.9 796.3,477.9 796.7,480.9 797.2,483.8 797.7,486.8 798.2,489.7 798.8,492.7 799.5,495.6 800.3,498.5 801.3,501.3 802.4,504.1 803.5,506.9 804.8,509.6 806.1,512.3 807.4,515.0 808.9,517.6 810.4,520.2 812.0,522.7 813.6,525.2 815.4,527.7 817.2,530.0 819.1,532.3 821.1,534.6 823.3,536.6 825.7,538.4 828.3,539.8 831.1,540.8 834.0,541.3 836.9,541.3 839.8,540.8 842.6,539.7 845.2,538.3 847.5,536.5 849.6,534.4 851.5,532.0 853.1,529.5 854.5,526.9 855.7,524.1 856.8,521.3 857.8,518.5 858.7,515.7 859.6,512.8 860.5,509.9 861.4,507.1 862.2,504.2 862.9,501.3 863.6,498.4 864.2,495.4 864.7,492.5 865.3,489.5 865.8,486.5 866.3,483.6 866.8,480.6 867.4,477.7 868.0,474.8 868.8,471.9 869.7,469.0 870.7,466.2 871.8,463.4 873.1,460.7 874.5,458.0 876.1,455.6 878.0,453.3 880.1,451.2 882.5,449.3 885.0,447.8 887.7,446.4 890.5,445.4 893.3,444.5 896.3,443.8 899.2,443.2 902.2,442.8 905.1,442.4 908.1,442.2 911.1,442.0 914.1,442.0 917.1,442.1 920.1,442.2 923.1,442.6 926.0,443.1 928.9,443.8 931.8,444.7 934.6,445.7 937.4,446.8 940.1,448.1 942.7,449.6 945.2,451.2 947.6,453.0 949.8,455.0 951.8,457.2 953.6,459.6 955.1,462.2 956.3,464.9 957.3,467.7 958.2,470.6 958.8,473.5 959.3,476.5 959.6,479.5 959.7,482.5 959.7,485.5 959.5,488.5 959.2,491.4 958.8,494.4 958.2,497.4 957.6,500.3 956.8,503.2 955.9,506.0 954.9,508.9 953.8,511.7 952.6,514.4 951.2,517.0 949.7,519.6 947.9,522.0 946.0,524.3 944.0,526.5 941.8,528.5 939.5,530.5 937.1,532.2 934.6,533.9 932.0,535.4 929.4,536.8 926.6,538.1 923.8,539.2 921.0,540.0 918.0,540.6 915.1,540.9 912.1,540.8 909.1,540.4 906.2,539.7 903.4,538.8 900.6,537.6 897.9,536.3 895.3,534.9 892.8,533.3 890.3,531.6 887.9,529.8 885.7,527.8 883.5,525.7 881.5,523.5 879.7,521.1 878.0,518.6 876.6,516.0 875.2,513.4 874.0,510.6 872.9,507.8 872.0,505.0 871.1,502.1 870.3,499.2 869.6,496.3 869.1,493.4 868.6,490.4 868.3,487.4 868.1,484.4 868.1,481.4 868.3,478.4 868.7,475.5 869.3,472.5 870.1,469.7 871.1,466.8 872.2,464.1 873.6,461.4 875.3,458.9 877.1,456.6 879.2,454.5 881.5,452.6 884.0,450.9 886.5,449.4 889.2,448.1 892.0,446.9 894.8,445.9 897.7,445.1 900.6,444.4 903.6,444.0 906.6,443.8 909.6,443.6 912.6,443.6 915.6,443.6 918.6,443.7 921.6,443.7 924.6,443.8 927.6,443.8 930.6,443.8 933.6,443.8 936.6,443.8 939.6,443.9 942.6,444.0 945.6,444.1 948.5,444.2 951.5,444.4 954.5,444.6 957.5,444.8 960.5,445.1 963.5,445.5 966.4,446.0 969.4,446.6 972.3,447.1 975.3,447.7 978.2,448.2 981.2,448.6 984.2,448.9 987.2,448.9 990.2,448.8 993.1,448.4 996.1,447.8 999.0,447.1 1001.8,446.2 1004.7,445.2 1007.5,444.1 1010.2,443.0 1012.9,441.7 1015.6,440.4 1018.3,439.1 1021.0,437.7 1023.6,436.2 1026.2,434.7 1028.7,433.1 1031.3,431.5 1033.7,429.8 1036.1,428.0 1038.5,426.2 1040.9,424.3 1043.1,422.4 1045.4,420.4 1047.6,418.3 1049.7,416.2 1051.8,414.1 1053.8,411.8 1055.7,409.5 1057.6,407.2 1059.4,404.8 1061.2,402.4 1063.0,400.0 1064.8,397.6 1066.5,395.2 1068.3,392.8 1069.7,391.0 1070.8,389.6"/>
  </g>
</svg>

<!-- texts title -->
<span class="t" style="left:42.6px;top:44.2px;font-size:10.5px;color:#fdf0ea;transform:scaleX(0.914);transform-origin:0 0">AutoSave</span>
<span class="t" style="left:296px;top:44.2px;font-size:10.5px;color:#fdf0ea;transform:scaleX(0.895);transform-origin:0 0">Hello - Saved to OneDrive</span>
<span class="t" style="left:93px;top:45px;font-size:7.7px;color:#7a5a55">On</span>
<span class="t" style="left:538.5px;top:45.5px;font-size:9px;color:#6b3a2c">Search</span>
<!-- tabs -->
<span class="t tab" style="left:41.5px;top:73px">File</span>
<span class="t tab" style="left:85.5px;top:73px;letter-spacing:0.6px">Home</span>
<span class="t tab" style="left:140px;top:73px">Insert</span>
<span class="t tab" style="left:191.5px;top:73px;font-size:10.9px;color:#2a2a2a;-webkit-text-stroke:0.35px #2a2a2a">Draw</span>
<span class="t tab" style="left:241px;top:73px;letter-spacing:0.25px">Design</span>
<span class="t tab" style="left:300px;top:73px;letter-spacing:0.15px">Transitions</span>
<span class="t tab" style="left:378.5px;top:73px;letter-spacing:0.35px">Animations</span>
<span class="t tab" style="left:459.5px;top:73px">Slide Show</span>
<span class="t tab" style="left:537.5px;top:73px">Review</span>
<span class="t tab" style="left:594.5px;top:73px;letter-spacing:0.6px">View</span>
<span class="t tab" style="left:641px;top:73px;letter-spacing:0.8px">Help</span>
<div class="a" style="left:192px;top:85px;width:27px;height:2px;background:#b7472a"></div>
<!-- ribbon labels -->
<span class="t lbl" style="left:377px;top:126px;font-size:10.4px;letter-spacing:0.2px">Draw with</span>
<span class="t lbl" style="left:387px;top:139.5px">Touch</span>
<span class="t lbl" style="left:444.5px;top:123.5px;letter-spacing:0.3px">Ruler</span>
<span class="t lbl" style="left:495.5px;top:123.5px;letter-spacing:0.5px">Ink to</span>
<span class="t lbl" style="left:500px;top:138.5px;letter-spacing:0.25px">Text</span>
<span class="t lbl" style="left:533px;top:123.5px;letter-spacing:0.65px">Ink to</span>
<span class="t lbl" style="left:532.5px;top:138.5px;letter-spacing:0.3px">Shape</span>
<span class="t lbl" style="left:571px;top:123.5px;letter-spacing:0.65px">Ink to</span>
<span class="t lbl" style="left:572.5px;top:138.5px;letter-spacing:1px">Math</span>
<span class="t lbl" style="left:628px;top:123.5px;letter-spacing:0.6px">Ink</span>
<span class="t lbl" style="left:620px;top:138.5px">Replay</span>
<span class="t grp" style="left:191px;top:160px;letter-spacing:0.15px">Drawing Tools</span>
<span class="t grp" style="left:441px;top:160px">Stencils</span>
<span class="t grp" style="left:529px;top:160px;letter-spacing:0.25px">Convert</span>
<span class="t grp" style="left:620.5px;top:160px">Replay</span>
<span class="t" style="left:43.5px;top:194px;font-size:11px;color:#c05a3e">1</span>
</body></html>
